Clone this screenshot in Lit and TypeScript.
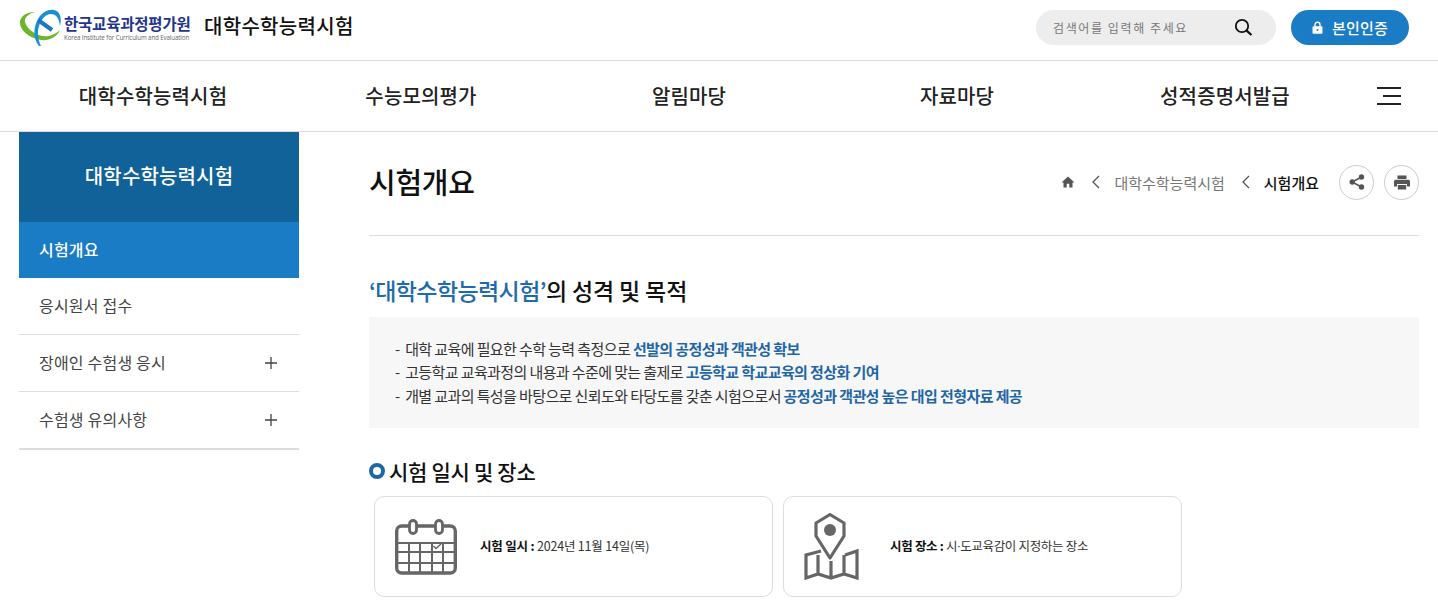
import { LitElement, html, css } from 'lit';
import { customElement } from 'lit/decorators.js';

const NAV = ['대학수학능력시험', '수능모의평가', '알림마당', '자료마당', '성적증명서발급'];

@customElement('app-root')
export class AppRoot extends LitElement {
  static styles = css`
    :host {
      display: block;
      font-family: 'Noto Sans CJK KR', 'Noto Sans', sans-serif;
      color: #111;
      background: #fff;
    }
    .top {
      height: 61px;
      display: flex;
      align-items: center;
      padding: 0 29px 5px 19px;
      box-sizing: border-box;
      border-bottom: 1px solid #ddd;
    }
    .logo { display: flex; align-items: center; width: 185px; gap: 1px; }
    .logo svg { flex: none; }
    .logo-text { display: flex; flex-direction: column; gap: 3px; margin-top: 2px; }
    .logo-ko { font-size: 15.5px; line-height: 15px; font-weight: 700; color: #24348c; letter-spacing: -0.2px; white-space: nowrap; }
    .logo-en { font-family: 'Open Sans', sans-serif; font-size: 6.2px; line-height: 8px; color: #666; letter-spacing: -0.12px; white-space: nowrap; }
    .site { font-size: 20px; font-weight: 500; letter-spacing: 0.3px; margin-top: -4px; }
    .search {
      margin-left: auto;
      width: 240px;
      height: 35px;
      border-radius: 18px;
      background: #ededed;
      display: flex;
      align-items: center;
      padding: 0 23px 0 17px;
      box-sizing: border-box;
      font-size: 12px;
      color: #777;
      letter-spacing: 1.6px;
    }
    .search svg { margin-left: auto; }
    .auth {
      margin-left: 15px;
      width: 118px;
      height: 35px;
      border-radius: 18px;
      background: #1a7cc5;
      color: #fff;
      font-size: 15px;
      font-weight: 500;
      letter-spacing: 0.2px;
      display: flex;
      align-items: center;
      justify-content: center;
      gap: 9px;
    }
    .nav {
      height: 71px;
      display: grid;
      grid-template-columns: repeat(5, 268px) 1fr;
      padding: 0 37px 2px 19px;
      box-sizing: border-box;
      align-items: center;
      border-bottom: 1px solid #ddd;
    }
    .nav a { text-align: center; font-size: 20px; font-weight: 500; color: #222; letter-spacing: 0.15px; }
    .burger { justify-self: end; display: flex; flex-direction: column; align-items: flex-end; gap: 6px; margin-top: 2px; }
    .burger i { display: block; height: 2px; background: #222; width: 24px; }
    .burger i:nth-child(2) { width: 18px; }
    .page { display: flex; padding: 0 19px; height: 476px; overflow: hidden; }
    .side { width: 280px; flex: none; }
    .side-title {
      height: 90px;
      padding-bottom: 3px;
      box-sizing: border-box;
      background: #106299;
      color: #fff;
      font-size: 20px;
      font-weight: 500;
      letter-spacing: 0.15px;
      display: flex;
      align-items: center;
      justify-content: center;
    }
    .side-item {
      border-bottom: 1px solid #ddd;
      display: flex;
      align-items: center;
      justify-content: space-between;
      padding: 0 22px 2px 20px;
      height: 54px;
      font-size: 16px;
      color: #444;
      letter-spacing: 0.2px;
    }
    .side-item.on { background: #1a7cc5; color: #fff; font-weight: 500; border-bottom: 0; }
    .side-item:last-child { border-bottom: 2px solid #ddd; }
    .plus { width: 12px; height: 12px; margin-top: 2px; }
    .main { margin-left: 70px; flex: 1; min-width: 0; }
    .head {
      height: 104px;
      display: flex;
      align-items: center;
      border-bottom: 1px solid #ddd;
      padding-bottom: 3px;
      box-sizing: border-box;
    }
    h1 { margin: -3px 0 0; font-size: 29px; font-weight: 500; letter-spacing: -0.3px; }
    .crumbs { margin-left: auto; display: flex; align-items: center; font-size: 15px; color: #777; letter-spacing: 0; }
    .crumbs b { color: #111; font-weight: 500; }
    .chev { margin: 0 14px 0 17px; }
    .round {
      width: 33px;
      height: 33px;
      border: 1px solid #ccc;
      border-radius: 50%;
      display: flex;
      align-items: center;
      justify-content: center;
      margin-left: 10px;
    }
    .round.first { margin-left: 20px; }
    h2 { margin: 37px 0 0; font-size: 23px; line-height: 34px; font-weight: 500; letter-spacing: -0.15px; }
    .blue { color: #1f6aa8; letter-spacing: -0.6px; }
    .box {
      margin-top: 10px;
      height: 111px;
      background: #f7f7f7;
      padding: 19.5px 26px 0;
      box-sizing: border-box;
      font-size: 15px;
      line-height: 23.5px;
      color: #333;
      letter-spacing: -0.6px;
    }
    .box b { color: #1f66a6; font-weight: 700; }
    .box div { white-space: pre; }
    h3 {
      margin: 26px 0 0;
      font-size: 21px;
      line-height: 34px;
      font-weight: 500;
      letter-spacing: -0.3px;
      display: flex;
      align-items: center;
      gap: 4px;
    }
    .ring { width: 16px; height: 16px; box-sizing: border-box; border: 4px solid #1f66a6; border-radius: 50%; }
    .cards { display: flex; gap: 10px; margin: 8px 0 0 5px; }
    .card {
      width: 399px;
      height: 101px;
      box-sizing: border-box;
      border: 1px solid #ddd;
      border-radius: 10px;
      display: flex;
      align-items: center;
      font-size: 12.5px;
      color: #333;
      letter-spacing: -0.2px;
      padding-left: 20px;
    }
    .card svg { flex: none; }
    .card b { color: #111; font-weight: 700; }
    .card span { margin: -2px 0 0 23px; }
    .card.place span { margin-left: 31px; letter-spacing: -0.32px; }
    .dot { font-family: 'Roboto', sans-serif; font-style: normal; }
  `;

  render() {
    return html`
      <div class="top">
        <div class="logo">
          <svg width="44" height="40" viewBox="0 0 44 40" fill="none">
            <path d="M1 13C3 6 10 4 16 4C9 6 5 10 6 14C8 22 20 30 30 28C34 27 38 25 41 22C38 29 30 33 22 32C10 30 0 22 1 13Z" fill="#6cb52d"/>
            <path d="M20 38C14 30 14 20 19 11C23 4 30 1 35 2C41 3 43 10 41 18C40 10 37 6 32 6C26 6 22 12 20 18C18 25 19 32 22 38Z" fill="#1b8fd6"/>
            <path d="M19 12L33 22" stroke="#1a78c2" stroke-width="4"/>
          </svg>
          <div class="logo-text">
            <div class="logo-ko">한국교육과정평가원</div>
            <div class="logo-en">Korea Institute for Curriculum and Evaluation</div>
          </div>
        </div>
        <div class="site">대학수학능력시험</div>
        <div class="search">
          검색어를 입력해 주세요
          <svg width="19" height="19" viewBox="0 0 19 19" fill="none" stroke="#111">
            <circle cx="8" cy="8" r="6.2" stroke-width="1.8"/>
            <path d="M12.6 12.6L17.5 17" stroke-width="2.2"/>
          </svg>
        </div>
        <div class="auth">
          <svg width="11" height="13" viewBox="0 0 11 13">
            <path d="M3 6V3.8a2.5 2.5 0 0 1 5 0V6" fill="none" stroke="#fff" stroke-width="1.4"/>
            <rect x="0.5" y="5.2" width="10" height="7.6" rx="1.2" fill="#fff"/>
            <circle cx="5.5" cy="9" r="1" fill="#1a7cc5"/>
          </svg>
          본인인증
        </div>
      </div>
      <div class="nav">
        ${NAV.map((n) => html`<a>${n}</a>`)}
        <div class="burger"><i></i><i></i><i></i></div>
      </div>
      <div class="page">
        <div class="side">
          <div class="side-title">대학수학능력시험</div>
          <div class="side-item on">시험개요</div>
          <div class="side-item">응시원서 접수</div>
          <div class="side-item">장애인 수험생 응시 ${this.plus()}</div>
          <div class="side-item">수험생 유의사항 ${this.plus()}</div>
        </div>
        <div class="main">
          <div class="head">
            <h1>시험개요</h1>
            <div class="crumbs">
              <svg width="14" height="12" viewBox="0 0 14 12"><path d="M7 0.5L0.5 6.5H2.5V11.5H5.7V7.8H8.3V11.5H11.5V6.5H13.5Z" fill="#555"/></svg>
              ${this.chev()}
              대학수학능력시험
              ${this.chev()}
              <b>시험개요</b>
              <div class="round first">
                <svg width="16" height="16" viewBox="0 0 16 16" fill="#555">
                  <circle cx="12.5" cy="3" r="2.7"/><circle cx="12.5" cy="13" r="2.7"/><circle cx="3.2" cy="8" r="2.7"/>
                  <path d="M3.2 8L12.5 3M3.2 8L12.5 13" stroke="#555" stroke-width="1.5"/>
                </svg>
              </div>
              <div class="round">
                <svg width="16" height="15" viewBox="0 0 16 15" fill="#555">
                  <rect x="3.5" y="0.5" width="9" height="3.5"/>
                  <path d="M1.5 4.8H14.5A1.5 1.5 0 0 1 16 6.3V11.5H13V9H3V11.5H0V6.3A1.5 1.5 0 0 1 1.5 4.8Z"/>
                  <rect x="3.8" y="10" width="8.4" height="4.5"/>
                </svg>
              </div>
            </div>
          </div>
          <h2><span class="blue">‘대학수학능력시험’</span>의 성격 및 목적</h2>
          <div class="box">
            <div>-  대학 교육에 필요한 수학 능력 측정으로 <b>선발의 공정성과 객관성 확보</b></div>
            <div>-  고등학교 교육과정의 내용과 수준에 맞는 출제로 <b>고등학교 학교교육의 정상화 기여</b></div>
            <div>-  개별 교과의 특성을 바탕으로 신뢰도와 타당도를 갖춘 시험으로서 <b>공정성과 객관성 높은 대입 전형자료 제공</b></div>
          </div>
          <h3><i class="ring"></i>시험 일시 및 장소</h3>
          <div class="cards">
            <div class="card">
              <svg width="62" height="56" viewBox="0 0 62 56" fill="none" stroke="#666">
                <rect x="1.7" y="7" width="58.6" height="47" rx="5" stroke-width="3.4"/>
                <path d="M3 24H59M3 33H59M3 44H59M14 24V53M25 24V53M37 24V53M48 24V53" stroke-width="2"/>
                <rect x="14.5" y="1.5" width="7" height="13" rx="3.5" fill="#fff" stroke-width="2.8"/>
                <rect x="40.5" y="1.5" width="7" height="13" rx="3.5" fill="#fff" stroke-width="2.8"/>
                <path d="M38.5 27L41 29.5L46 25" stroke-width="1.5"/>
              </svg>
              <span><b>시험 일시 :</b> 2024년 11월 14일(목)</span>
            </div>
            <div class="card place">
              <svg width="55" height="67" viewBox="0 0 55 67" fill="none" stroke="#666" stroke-width="3.2">
                <path d="M26 1.5L40 10V23L26 45L12 23V10Z" stroke-linejoin="round"/>
                <circle cx="26" cy="17" r="6" fill="#666" stroke="none"/>
                <path d="M17 38L2 42V65L14 61L27 65L40 61L53 65V38L41 42M14 42V61M27 48V65M40 42V61"/>
              </svg>
              <span><b>시험 장소 :</b> 시<em class="dot">·</em>도교육감이 지정하는 장소</span>
            </div>
          </div>
        </div>
      </div>
    `;
  }

  private plus() {
    return html`<svg class="plus" viewBox="0 0 12 12"><path d="M6 0V12M0 6H12" stroke="#444" stroke-width="1.3"/></svg>`;
  }

  private chev() {
    return html`<svg class="chev" width="8" height="14" viewBox="0 0 8 14" fill="none"><path d="M7 1L1 7L7 13" stroke="#555" stroke-width="1.3"/></svg>`;
  }
}
